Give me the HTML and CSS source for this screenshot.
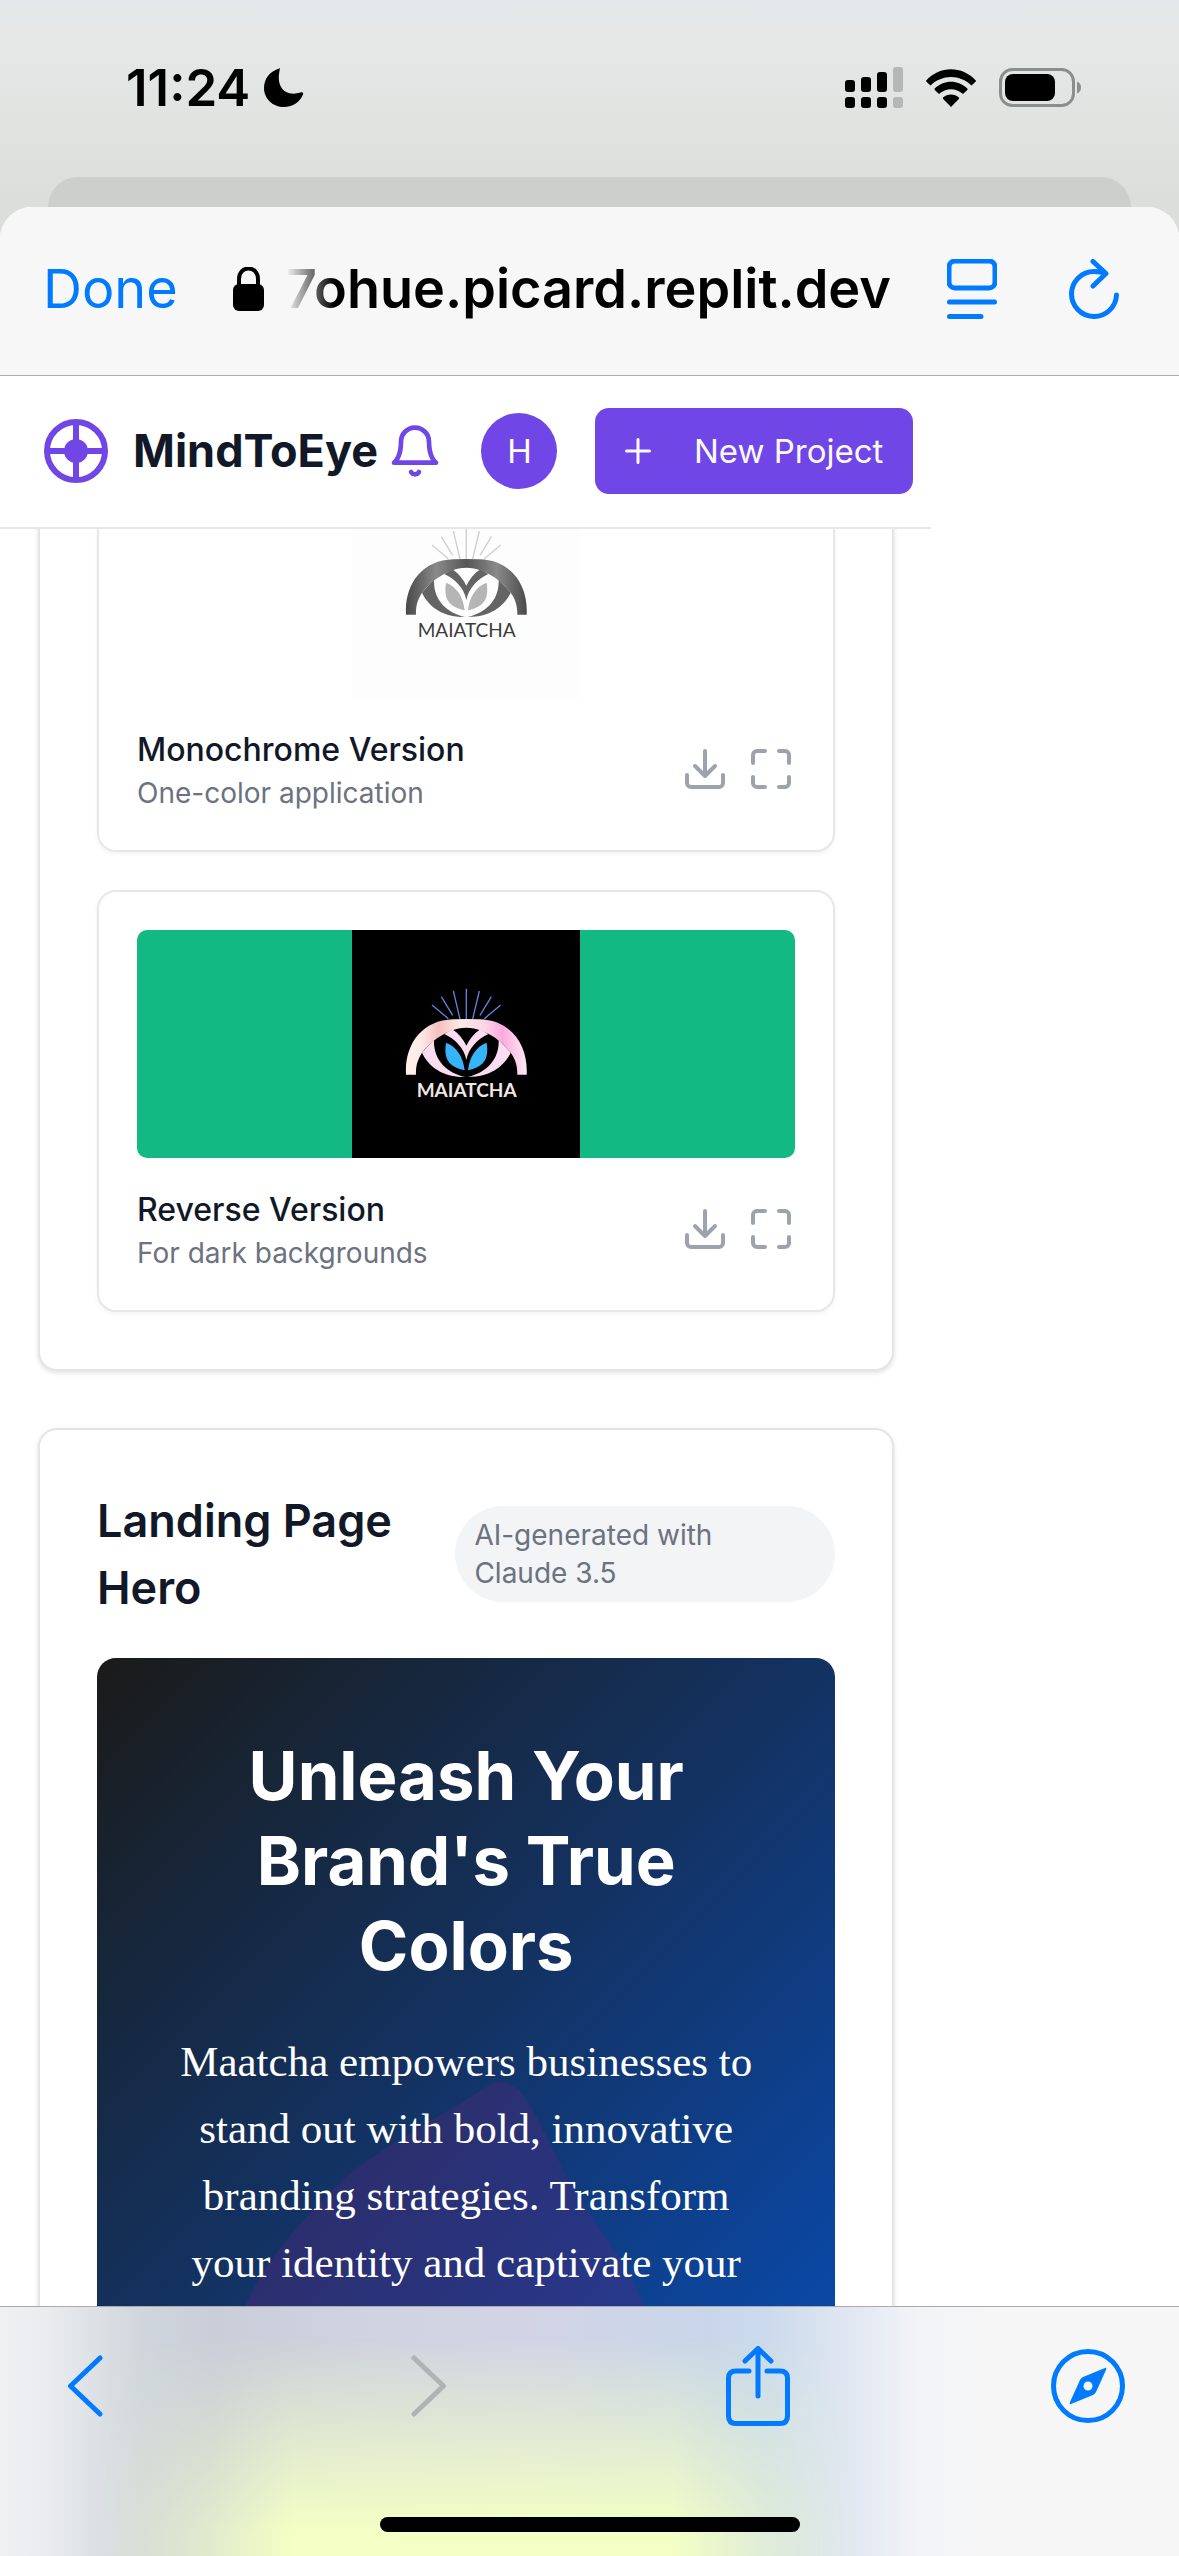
FILE: index.html
```html
<!DOCTYPE html>
<html lang="en">
<head>
<meta charset="utf-8">
<meta name="viewport" content="width=device-width, initial-scale=1">
<title>MindToEye</title>
<link rel="stylesheet" href="styles.css">
</head>
<body>
<svg class="defs" aria-hidden="true">
  <defs>
    <linearGradient id="mono" x1="0" x2="1" y1="0" y2="0">
      <stop offset="0" stop-color="#484848"/><stop offset=".25" stop-color="#8a8a8a"/><stop offset=".5" stop-color="#555"/><stop offset=".75" stop-color="#8a8a8a"/><stop offset="1" stop-color="#4a4a4a"/>
    </linearGradient>
    <linearGradient id="blush" x1="0" x2="1" y1="0" y2="0">
      <stop offset="0" stop-color="#fff0ec"/><stop offset=".12" stop-color="#fdebe6"/><stop offset=".27" stop-color="#f6bfc0"/><stop offset=".45" stop-color="#fbeae6"/><stop offset=".65" stop-color="#fbd6e6"/><stop offset=".8" stop-color="#fcaade"/><stop offset="1" stop-color="#fdeaf6"/>
    </linearGradient>
    <symbol id="eye" viewBox="66 90 684 684">
      <g class="eye-rays"><path d="M306 315 355 356M334 290 368 346M370 273 390 357M409 266V357M448 273 428 357M484 290 450 346M512 315 463 356"/></g>
      <path class="eye-lens" d="M276 458C295 500 340 532 405 531C350 518 310 480 312 420C298 434 286 445 276 458ZM542 458C523 500 478 532 413 531C468 518 508 480 506 420C520 434 532 445 542 458ZM343 402 367 388C385 400 400 418 409 437C418 418 433 400 451 388L475 402C445 415 415 445 409 480C403 445 373 415 343 402Z"/>
      <path class="eye-arch" d="M228 524C223 435 275 360 370 358Q409 356 448 358C543 360 595 435 590 524H562C562 495 555 475 542 458C520 430 495 408 455 392C425 380 393 380 363 392C325 408 295 432 276 458C262 480 257 500 258 524Z"/>
      <path class="eye-leaf" d="M348 428C380 440 400 470 404 511C370 502 338 490 348 428ZM470 428C438 440 418 470 414 511C448 502 480 490 470 428Z"/>
      <text class="eye-name" x="410" y="591" text-anchor="middle">MAIATCHA</text>
    </symbol>
    <symbol id="download" viewBox="0 0 24 24"><path d="M21 15v4a2 2 0 0 1-2 2H5a2 2 0 0 1-2-2v-4M7 10.500l5 5 5-5M12 15.500V3"/></symbol>
    <symbol id="expand" viewBox="0 0 24 24"><path d="M3 9V5a2 2 0 0 1 2-2h4M16 3h3a2 2 0 0 1 2 2v4M21 16v3a2 2 0 0 1-2 2h-3M9 21H5a2 2 0 0 1-2-2v-3"/></symbol>
  </defs>
</svg>

<div class="screen">
  <div class="status">
    <div class="clock">
      <span>11:24</span>
      <svg width="40" height="40" viewBox="0 0 40 40" aria-label="Do not disturb"><path fill="#000" d="M15 .5C5 4 0 11 0 20C0 31 9 39 20 39C29 39 36 34 39 26.500C40 24.500 38 24 36.500 24.500C22 29 12 20 15.500 3C16 1 16 0 15 .5Z"/></svg>
    </div>
    <div class="signals">
      <svg width="58" height="42" viewBox="0 0 58 42" aria-label="Signal">
        <g fill="#000"><rect y="13" width="10" height="12" rx="3"/><rect x="16" y="10" width="10" height="15" rx="3"/><rect x="32" y="5" width="10" height="20" rx="3"/><rect y="30" width="10" height="11" rx="3"/><rect x="16" y="30" width="10" height="11" rx="3"/><rect x="32" y="30" width="10" height="11" rx="3"/></g>
        <g fill="#b5b7b6"><rect x="48" width="10" height="25" rx="3"/><rect x="48" y="30" width="10" height="11" rx="3"/></g>
      </svg>
      <svg width="52" height="38" viewBox="0 0 52 38" aria-label="Wi-Fi"><path d="M1.200 11.500C15-3.500 37-3.500 50.800 11.500Q51 12 50.800 12.500L46.500 16.500C35 5 17 5 5.500 16.500L1.200 12.500ZM9.500 19.800C19 10.500 33 10.500 42.500 19.800Q42.700 20.500 42.300 21L38 25C31 18.500 21 18.500 14 25L9.700 21ZM18 28.500C22.500 24.500 29.500 24.500 34 28.500Q34.300 29.500 33.800 30L26 38 18.200 30Q17.700 29.500 18 28.500Z"/></svg>
      <svg width="84" height="40" viewBox="0 0 84 40" aria-label="Battery"><rect x="1.500" y="1.500" width="73" height="36" rx="12" fill="none" stroke="#8c8e8d" stroke-width="3"/><rect x="6" y="6" width="50" height="27" rx="8"/><path fill="#8c8e8d" d="M78 13.500Q82 15 82 19.500T78 25.500Z"/></svg>
    </div>
  </div>
  <div class="sheet-behind"></div>

  <div class="sheet">
    <nav class="nav">
      <button class="done" type="button">Done</button>
      <div class="address">
        <svg width="31" height="44" viewBox="0 0 31 44" aria-label="Secure"><rect y="17" width="31" height="27" rx="6"/><path d="M6 19V12C6-2 25-2 25 12V19" fill="none" stroke="#000" stroke-width="4"/></svg>
        <span class="url">7ohue.picard.replit.dev</span>
      </div>
      <button type="button" aria-label="Page menu"><svg class="tint" width="50" height="60" viewBox="0 0 50 60"><rect x="2" y="2" width="46" height="27" rx="6"/><path d="M2.500 43H47.500M2.500 57.500H34"/></svg></button>
      <button class="reload" type="button" aria-label="Reload"><svg class="tint" width="50" height="60" viewBox="0 0 50 60"><path d="M24 2.500 37 14.500 24 27M36 14.500C34 13.500 29 12.500 25 12.500A22.500 22.500 0 1 0 47.500 36"/></svg></button>
    </nav>

    <div class="web">
      <header class="site-header">
        <a class="brand" href="#">
          <svg width="64" height="64" viewBox="0 0 64 64" aria-hidden="true"><circle cx="32" cy="32" r="29" fill="none" stroke="#7047e6" stroke-width="6"/><circle cx="32" cy="32" r="12" fill="#7047e6"/><path d="M32 3V61M3 32H61" stroke="#7047e6" stroke-width="6"/></svg>
          <span>MindToEye</span>
        </a>
        <button class="bell" type="button" aria-label="Notifications"><svg width="56" height="56" viewBox="0 0 24 24"><path d="M6 8a6 6 0 0 1 12 0c0 7 3 9 3 9H3s3-2 3-9M10.300 21a1.940 1.940 0 0 0 3.400 0"/></svg></button>
        <button class="avatar" type="button">H</button>
        <button class="new" type="button">
          <svg width="26" height="26" viewBox="0 0 26 26" aria-hidden="true"><path d="M13 1.500V24.500M1.500 13H24.500"/></svg>
          <span>New Project</span>
        </button>
      </header>

      <main class="content">
        <section class="card card-logos">
          <article class="logo-card">
            <div class="preview preview-mono"><svg class="logo mono" viewBox="0 0 228 228" role="img" aria-label="Maiatcha monochrome logo"><use href="#eye"/></svg></div>
            <div class="caption">
              <div><h3>Monochrome Version</h3><p>One-color application</p></div>
              <div class="actions">
                <button type="button" aria-label="Download"><svg><use href="#download"/></svg></button>
                <button type="button" aria-label="Full screen"><svg><use href="#expand"/></svg></button>
              </div>
            </div>
          </article>
          <article class="logo-card">
            <div class="preview preview-reverse"><svg class="logo reverse" viewBox="0 0 228 228" role="img" aria-label="Maiatcha reverse logo"><use href="#eye"/></svg></div>
            <div class="caption">
              <div><h3>Reverse Version</h3><p>For dark backgrounds</p></div>
              <div class="actions">
                <button type="button" aria-label="Download"><svg><use href="#download"/></svg></button>
                <button type="button" aria-label="Full screen"><svg><use href="#expand"/></svg></button>
              </div>
            </div>
          </article>
        </section>

        <section class="card">
          <div class="card-head">
            <h2>Landing Page Hero</h2>
            <span class="pill">AI-generated with<br>Claude 3.5</span>
          </div>
          <div class="hero">
            <svg class="hero-shape" viewBox="0 0 400 600" aria-hidden="true"><path d="M0 224C22 175 60 135 100 96C135 66 195 35 243 4Q257-4 268 4C285 12 300 55 324 98C345 140 385 180 399 224C440 400 400 500 200 500S-60 380 0 224Z"/></svg>
            <h1>Unleash Your Brand's True Colors</h1>
            <p>Maatcha empowers businesses to stand out with bold, innovative branding strategies. Transform your identity and captivate your</p>
          </div>
        </section>
      </main>
    </div>
  </div>

  <footer class="toolbar">
    <div class="tools">
      <button type="button" aria-label="Back"><svg class="tint" width="36" height="62" viewBox="0 0 36 62"><path d="M33 3 3.500 31 33 59"/></svg></button>
      <button type="button" aria-label="Forward" disabled><svg class="tint" width="36" height="62" viewBox="0 0 36 62"><path d="M3 3 32.500 31 3 59"/></svg></button>
      <button type="button" aria-label="Share"><svg class="tint" width="64" height="80" viewBox="0 0 64 80"><path d="M23 25H10Q2.500 25 2.500 32V70Q2.500 77.500 10 77.500H54Q61.500 77.500 61.500 70V32Q61.500 25 54 25H41M32 50V3M19 15 32 2.500 45 15"/></svg></button>
      <button type="button" aria-label="Open in Safari"><svg class="tint" width="74" height="74" viewBox="0 0 74 74"><circle cx="37" cy="37" r="34.500"/><path fill="#007aff" stroke="none" fill-rule="evenodd" d="M54 19Q56 18 55 21L45 43Q44 45 42 46L20 55Q18 56 19 53L29 31Q30 29 32 28ZM37 32.500A4.500 4.500 0 1 0 37 41.500A4.500 4.500 0 0 0 37 32.500Z"/></svg></button>
    </div>
    <div class="home-bar"></div>
  </footer>
</div>
</body>
</html>
```
FILE: styles.css
```css
* { box-sizing: border-box; }

body, h1, h2, h3, p { margin: 0; }

body {
  font-family: Inter, "Liberation Sans", sans-serif;
  color: #111827;
  background: #fff;
}

button {
  padding: 0;
  border: 0;
  background: none;
  font: inherit;
  color: inherit;
}

svg { display: block; flex: none; }

.defs { position: absolute; width: 0; height: 0; }

.screen {
  display: flex;
  flex-direction: column;
  height: 100vh;
  overflow: hidden;
  background: linear-gradient(#e5e8ea 0, #e5e8e6 40px, #dcdedc 200px, #dcdedc 260px);
}

/* Status bar */
.status {
  flex: none;
  display: flex;
  justify-content: space-between;
  height: 177px;
  padding: 58px 96px 0 126px;
}

.clock, .signals { display: flex; align-items: center; height: 60px; }
.clock { gap: 14px; font-size: 51px; font-weight: 600; line-height: 60px; color: #000; }
.signals { gap: 22px; }

.sheet-behind {
  flex: none;
  height: 30px;
  margin: 0 48px;
  border-radius: 30px 30px 0 0;
  background: #cdcfcc;
}

/* Browser sheet */
.sheet {
  flex: 1;
  display: flex;
  flex-direction: column;
  min-height: 0;
  overflow: hidden;
  border-radius: 32px 32px 0 0;
  background: #fff;
}

.nav {
  flex: none;
  display: flex;
  align-items: center;
  gap: 48px;
  height: 169px;
  padding: 0 60px 4px 43px;
  border-bottom: 1px solid #adadad;
  background: #f7f7f7;
}

.done { font-size: 54px; line-height: 68px; color: #007aff; }
.reload { margin-left: 24px; }

.address {
  flex: 1;
  display: flex;
  align-items: center;
  justify-content: flex-end;
  gap: 22px;
  min-width: 0;
  padding-right: 8px;
}

.url {
  font-size: 54px;
  font-weight: 600;
  line-height: 68px;
  white-space: nowrap;
  color: #000;
  -webkit-mask-image: linear-gradient(to right, transparent 0, #000 48px);
  mask-image: linear-gradient(to right, transparent 0, #000 48px);
}

.tint {
  fill: none;
  stroke: #007aff;
  stroke-width: 5;
  stroke-linecap: round;
  stroke-linejoin: round;
}

/* Web page */
.web { flex: 1; width: 79%; min-height: 0; }

.site-header {
  position: relative;
  z-index: 1;
  display: flex;
  align-items: center;
  height: 153px;
  padding: 0 18px 2px 44px;
  border-bottom: 2px solid #e5e7eb;
  background: #fff;
}

.brand {
  display: flex;
  align-items: center;
  gap: 25px;
  font-size: 45px;
  font-weight: 700;
  line-height: 56px;
  color: #111827;
  text-decoration: none;
}

.bell { margin-left: auto; }
.bell svg {
  fill: none;
  stroke: #7047e6;
  stroke-width: 2;
  stroke-linecap: round;
  stroke-linejoin: round;
}

.avatar {
  flex: none;
  width: 76px;
  height: 76px;
  margin: 0 38px;
  border-radius: 50%;
  font-size: 33px;
  color: #fff;
  background: #7047e6;
}

.new {
  flex: none;
  display: flex;
  align-items: center;
  justify-content: space-between;
  width: 318px;
  height: 86px;
  padding: 0 30px;
  border-radius: 14px;
  font-size: 33px;
  color: #f9faff;
  background: #7047e6;
}
.new svg { stroke: #f9faff; stroke-width: 3; stroke-linecap: round; }

/* The page is scrolled: its content starts behind the header */
.content {
  display: flex;
  flex-direction: column;
  gap: 57px;
  margin-top: -99px;
  padding: 0 37px 0 38px;
}

.card {
  padding: 57px;
  border: 2px solid #e5e5e5;
  border-radius: 19px;
  background: #fff;
  box-shadow: 0 2px 5px rgba(0, 0, 0, .12);
}

.card-logos {
  display: flex;
  flex-direction: column;
  gap: 38px;
  padding-top: 0;
  border-top: 0;
}

.logo-card {
  padding: 38px;
  border: 2px solid #e5e7eb;
  border-radius: 19px;
  box-shadow: 0 2px 4px rgba(0, 0, 0, .05);
}

.preview {
  display: flex;
  justify-content: center;
  overflow: hidden;
  margin-bottom: 28px;
  border-radius: 10px;
}
.preview-reverse { background: #12b982; }

.logo { width: 228px; height: 228px; }
.mono { background: #fdfdfd; --arch: url(#mono); --lens: #646464; --leaf: #b5b5b5; --ray: #cfcfcf; --name: #3c3c3c; --weight: 400; }
.reverse { background: #000; --arch: url(#blush); --lens: #fcdcf0; --leaf: #35b4fa; --ray: #5b83e0; --name: #f0e6e2; --weight: 700; }

.eye-arch { fill: var(--arch); }
.eye-lens { fill: var(--lens); }
.eye-leaf { fill: var(--leaf); }
.eye-rays { fill: none; stroke: var(--ray); stroke-width: 4; }
.eye-name { fill: var(--name); font-family: Lato, sans-serif; font-size: 57px; font-weight: var(--weight); }

.caption { display: flex; align-items: center; justify-content: space-between; }
.caption h3 { font-size: 32px; font-weight: 500; line-height: 48px; }
.caption p { font-size: 28px; line-height: 38px; color: #6b7280; }

.actions { display: flex; gap: 18px; }
.actions svg {
  width: 48px;
  height: 48px;
  fill: none;
  stroke: #9ca3af;
  stroke-width: 2;
  stroke-linecap: round;
  stroke-linejoin: round;
}

.card-head {
  display: flex;
  align-items: center;
  justify-content: space-between;
  gap: 19px;
  margin-bottom: 37px;
}
.card-head h2 { font-size: 45px; font-weight: 600; line-height: 67px; }

.pill {
  flex: 0 0 380px;
  padding: 10px 19px;
  border-radius: 48px;
  font-size: 28px;
  line-height: 38px;
  color: #6b7280;
  background: #f3f4f6;
}

/* Generated hero */
.hero {
  position: relative;
  overflow: hidden;
  min-height: 1000px;
  padding: 75px;
  border-radius: 19px;
  text-align: center;
  color: #fff;
  background: linear-gradient(135deg, #1b1a18 0, #172536 200px, #133365 540px, #0a48a6 979px);
}
.hero h1 { position: relative; margin-bottom: 40px; font-size: 67px; font-weight: 700; line-height: 85px; }
.hero p { position: relative; font-family: "Liberation Serif", serif; font-size: 43px; line-height: 67px; }

.hero-shape { position: absolute; top: 424px; left: 20%; width: 400px; height: 600px; overflow: visible; }
.hero-shape path { fill: #5f2680; fill-opacity: .32; }

/* Browser toolbar, with the page showing through */
.toolbar {
  flex: none;
  position: relative;
  height: 250px;
  border-top: 1px solid #a9abb0;
  background: linear-gradient(to right, #eef0f2 0, #eaecef 4%, #d0d6dc 12%, #c9ced9 18%, #d0d3e0 32%, #d2d4e6 45%, #c9d6e9 60%, #cbdaec 65%, #e0e7f2 72%, #f3f4f7 78%, #f6f6f6 85%);
}
.toolbar::before {
  content: "";
  position: absolute;
  inset: 0;
  background: #f3ffc4;
  -webkit-mask: linear-gradient(transparent 12%, #000 90%), linear-gradient(to right, transparent 8%, #000 25%, #000 57%, transparent 73%);
  -webkit-mask-composite: source-in;
  mask: linear-gradient(transparent 12%, #000 90%), linear-gradient(to right, transparent 8%, #000 25%, #000 57%, transparent 73%);
  mask-composite: intersect;
}

.tools {
  position: relative;
  display: grid;
  grid-template-columns: 35fr 32fr 33fr auto;
  align-items: center;
  justify-items: start;
  height: 158px;
  padding: 0 54px 0 67px;
}
.tools button:disabled .tint { stroke: #b0b3b4; }

.home-bar {
  position: relative;
  width: 420px;
  height: 15px;
  margin: 52px auto 0;
  border-radius: 8px;
  background: #000;
}
```
